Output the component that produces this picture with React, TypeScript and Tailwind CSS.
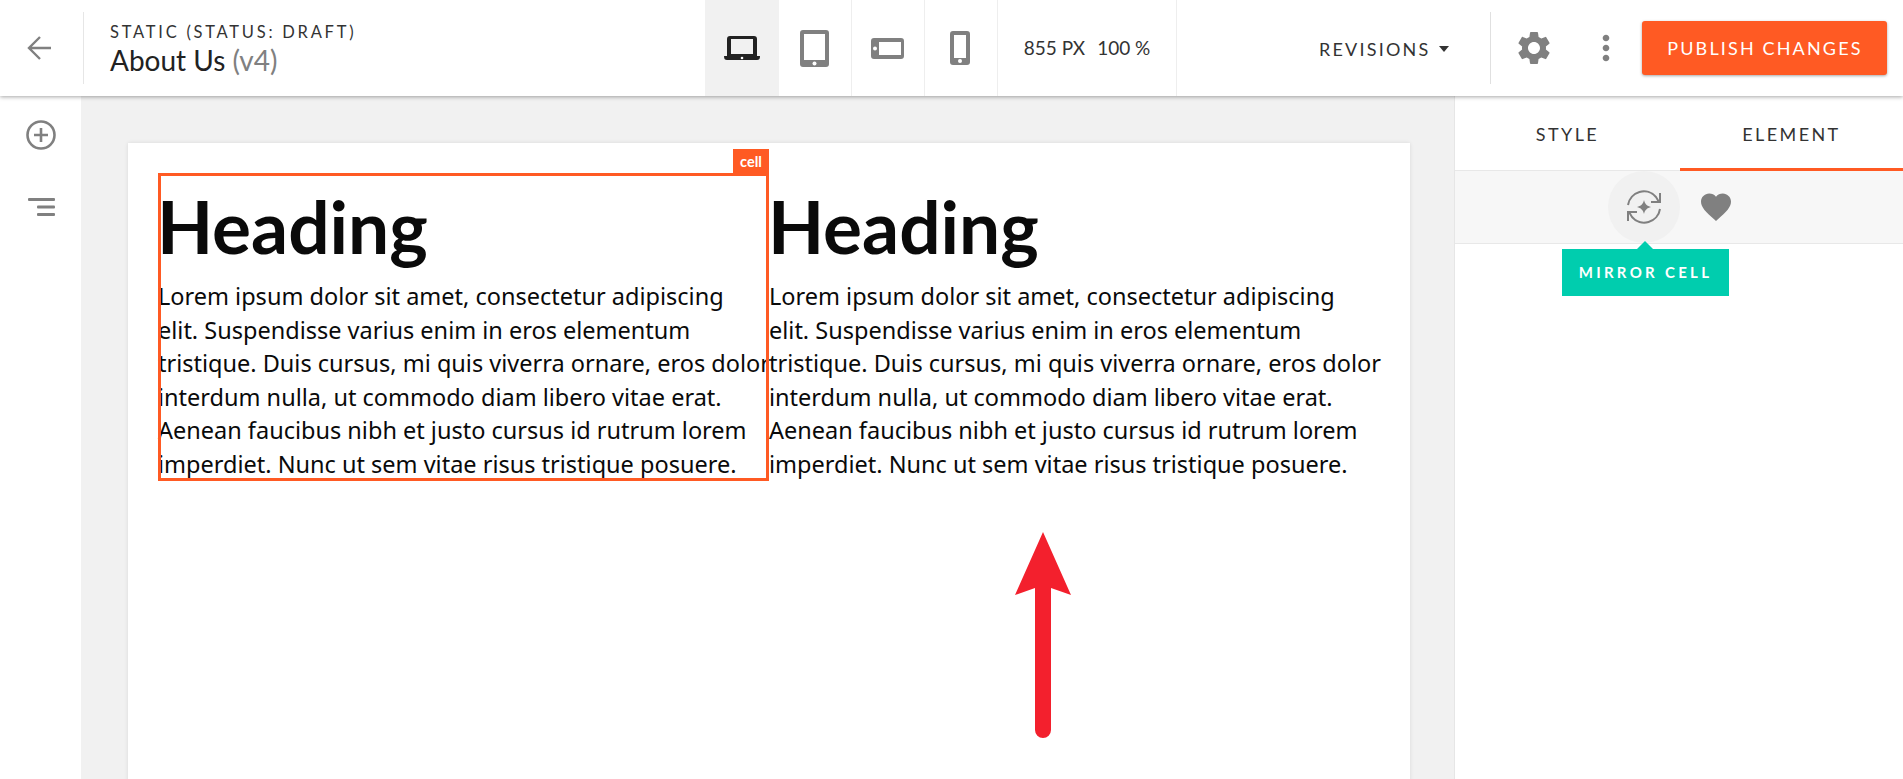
import React from "react";
import { MdSettings, MdMoreVert, MdFavorite } from "react-icons/md";

const ui = { fontFamily: '"Lato", "Noto Sans", sans-serif' };
const body = { fontFamily: '"Noto Sans", sans-serif' };

const lines = [
  "Lorem ipsum dolor sit amet, consectetur adipiscing",
  "elit. Suspendisse varius enim in eros elementum",
  "tristique. Duis cursus, mi quis viverra ornare, eros dolor",
  "interdum nulla, ut commodo diam libero vitae erat.",
  "Aenean faucibus nibh et justo cursus id rutrum lorem",
  "imperdiet. Nunc ut sem vitae risus tristique posuere.",
];

function Cell({ selected }: { selected?: boolean }) {
  return (
    <div className={selected ? "relative h-[308px] outline-3 -outline-offset-3 outline-[#ff5a23]" : "relative h-[308px]"}>
      {selected && (
        <div className="absolute right-0 -top-6 h-[26px] w-9 bg-[#ff5a23] text-center text-[14.5px] leading-[25px] font-bold text-white" style={ui}>
          cell
        </div>
      )}
      <h1 className="h-[107px] -ml-[1px] text-[73px] leading-[107px] font-bold text-[#0a0a0a]" style={ui}>Heading</h1>
      <p className="text-[23.5px] leading-[33.5px] text-[#0a0a0a] whitespace-nowrap" style={body}>
        {lines.map((l) => (
          <span key={l} className="block">{l}</span>
        ))}
      </p>
    </div>
  );
}

function Device({ active, children }: { active?: boolean; children: React.ReactNode }) {
  return (
    <div className={active ? "flex h-full w-[74px] items-center justify-center bg-[#f1f1f1]" : "flex h-full w-[73px] items-center justify-center border-r border-[#eeeeee] pr-[2px]"}>
      {children}
    </div>
  );
}

export default function App() {
  return (
    <div className="flex h-[779px] w-[1903px] flex-col overflow-hidden bg-white" style={ui}>
      <header className="relative z-10 flex h-24 shrink-0 items-center bg-white shadow-[0_1px_4px_rgba(0,0,0,0.35)]">
        <div className="flex h-[72px] w-[84px] shrink-0 items-center justify-center border-r border-[#e6e6e6]">
          <svg width="26" height="26" viewBox="0 0 26 26" fill="none" stroke="#808080" strokeWidth="2.4" className="-translate-x-[2px]">
            <path d="M24 13H2M13 2 2 13l11 11" />
          </svg>
        </div>
        <div className="ml-[26px] w-[595px] shrink-0 pt-[3px]">
          <div className="text-[16.5px] leading-5 tracking-[2.75px] text-[#333]">STATIC (STATUS: DRAFT)</div>
          <div className="text-[28px] leading-9 text-[#222]">
            About Us <span className="text-[#808080]">(v4)</span>
          </div>
        </div>
        <div className="flex h-full shrink-0 items-center">
          <Device active>
            <svg width="36" height="26" viewBox="0 0 36 26">
              <path d="M3 4a3 3 0 0 1 3-3h24a3 3 0 0 1 3 3v17H3Zm4 0v15h22V4Z" fill="#222" fillRule="evenodd" />
              <path d="M0 21h36c0 3-1 4-3 4H3c-2 0-3-1-3-4Z" fill="#222" />
              <circle cx="18" cy="23" r="1.3" fill="#fff" />
            </svg>
          </Device>
          <Device>
            <svg width="29" height="37" viewBox="0 0 29 37">
              <path d="M3 0h23a3 3 0 0 1 3 3v31a3 3 0 0 1-3 3H3a3 3 0 0 1-3-3V3a3 3 0 0 1 3-3Zm1 4v26h21V4Z" fill="#808080" fillRule="evenodd" />
              <circle cx="14.5" cy="33.5" r="2" fill="#fff" />
            </svg>
          </Device>
          <Device>
            <svg width="33" height="21" viewBox="0 0 33 21">
              <path d="M3 0h27a3 3 0 0 1 3 3v15a3 3 0 0 1-3 3H3a3 3 0 0 1-3-3V3a3 3 0 0 1 3-3Zm5 4v13h22V4Z" fill="#808080" fillRule="evenodd" />
              <circle cx="4" cy="10.5" r="2" fill="#fff" />
            </svg>
          </Device>
          <Device>
            <svg width="20" height="34" viewBox="0 0 20 34">
              <path d="M3 0h14a3 3 0 0 1 3 3v28a3 3 0 0 1-3 3H3a3 3 0 0 1-3-3V3a3 3 0 0 1 3-3Zm1 4v23h12V4Z" fill="#808080" fillRule="evenodd" />
              <circle cx="10" cy="30" r="2" fill="#fff" />
            </svg>
          </Device>
          <div className="flex h-full w-[179px] items-center justify-center gap-3 border-r border-[#eeeeee] text-[19px] text-[#333]">
            <span>855 PX</span>
            <span>100 %</span>
          </div>
        </div>
        <div className="ml-[142px] flex items-center pt-[2px] text-[18px] tracking-[2.2px] text-[#333]">
          REVISIONS
          <svg width="10" height="6" viewBox="0 0 10 6" className="ml-[9px]"><path d="M0 0h10L5 6Z" fill="#333" /></svg>
        </div>
        <div className="ml-[41px] h-[72px] w-px bg-[#e0e0e0]" />
        <MdSettings className="ml-[23px] text-[#808080]" size={40} />
        <MdMoreVert className="ml-[32px] text-[#808080]" size={40} />
        <button className="ml-[16px] h-[54px] w-[245px] rounded-[3px] bg-[#ff5a23] pt-[1px] text-[18px] tracking-[2.15px] text-white shadow-[0_1px_3px_rgba(0,0,0,0.35)]">
          PUBLISH CHANGES
        </button>
      </header>

      <div className="flex min-h-0 flex-1">
        <aside className="relative flex w-[81px] shrink-0 flex-col items-center bg-white shadow-[1px_0_3px_rgba(0,0,0,0.08)]">
          <svg width="30" height="30" viewBox="0 0 30 30" fill="none" stroke="#808080" strokeWidth="2.6" className="mt-[24px]">
            <circle cx="15" cy="15" r="13.5" />
            <path d="M15 8v14M8 15h14" />
          </svg>
          <svg width="27" height="18" viewBox="0 0 27 18" fill="#808080" className="mt-[48px] translate-x-[1px]">
            <rect x="0" y="0" width="27" height="3" rx="1" />
            <rect x="9" y="7.5" width="18" height="3" rx="1" />
            <rect x="9" y="15" width="18" height="3" rx="1" />
          </svg>
        </aside>
        <main className="relative min-w-0 flex-1 bg-[#f1f1f1] pl-[47px] pt-[47px]">
          <div className="h-[800px] w-[1282px] bg-white px-[30px] pt-[30px] shadow-[0_0_4px_rgba(0,0,0,0.1)]">
            <div className="grid grid-cols-2">
              <Cell selected />
              <Cell />
            </div>
          </div>
          <svg width="58" height="208" viewBox="0 0 58 208" className="absolute left-[933px] top-[435px]">
            <path d="M29 1 57 64 37 57V199a8 8 0 0 1-16 0V57L1 64Z" fill="#f3202d" />
          </svg>
        </main>
        <aside className="relative w-[449px] shrink-0 border-l border-[#e6e6e6] bg-white">
          <div className="flex h-[75px] border-b border-[#e8e8e8] text-[18px] tracking-[2.4px] text-[#333]">
            <div className="flex w-[225px] items-center justify-center pt-[3px]">STYLE</div>
            <div className="-mb-px flex w-[223px] items-center justify-center border-b-[3px] border-[#ff5a23] pt-[5px]">ELEMENT</div>
          </div>
          <div className="flex h-[73px] items-center gap-[18px] border-b border-[#e8e8e8] bg-[#f7f7f7] pl-[153px]">
            <div className="flex h-[72px] w-[72px] items-center justify-center rounded-full bg-[#f1f1f1]">
              <svg width="36" height="36" viewBox="0 0 36 36" fill="none" stroke="#808080" strokeWidth="2">
                <path d="M2 16A16 16 0 0 1 30 8l3 5" />
                <path d="M34 4v9h-9" />
                <path d="M34 20A16 16 0 0 1 6 28l-3-5" />
                <path d="M2 32v-9h9" />
                <path d="M18 11c1 4 3 6 7 7-4 1-6 3-7 7-1-4-3-6-7-7 4-1 6-3 7-7Z" fill="#808080" stroke="none" />
              </svg>
            </div>
            <MdFavorite className="text-[#808080]" size={36} />
          </div>
          <div className="absolute left-[107px] top-[153px] h-[47px] w-[167px] bg-[#00cdae] text-center text-[15px] leading-[47px] font-bold tracking-[3.3px] text-white outline-2 outline-white">
            MIRROR CELL
            <div className="absolute -top-[8px] left-[74px] h-0 w-0 border-x-[9px] border-b-[9px] border-x-transparent border-b-[#00cdae]" />
          </div>
        </aside>
      </div>
    </div>
  );
}
